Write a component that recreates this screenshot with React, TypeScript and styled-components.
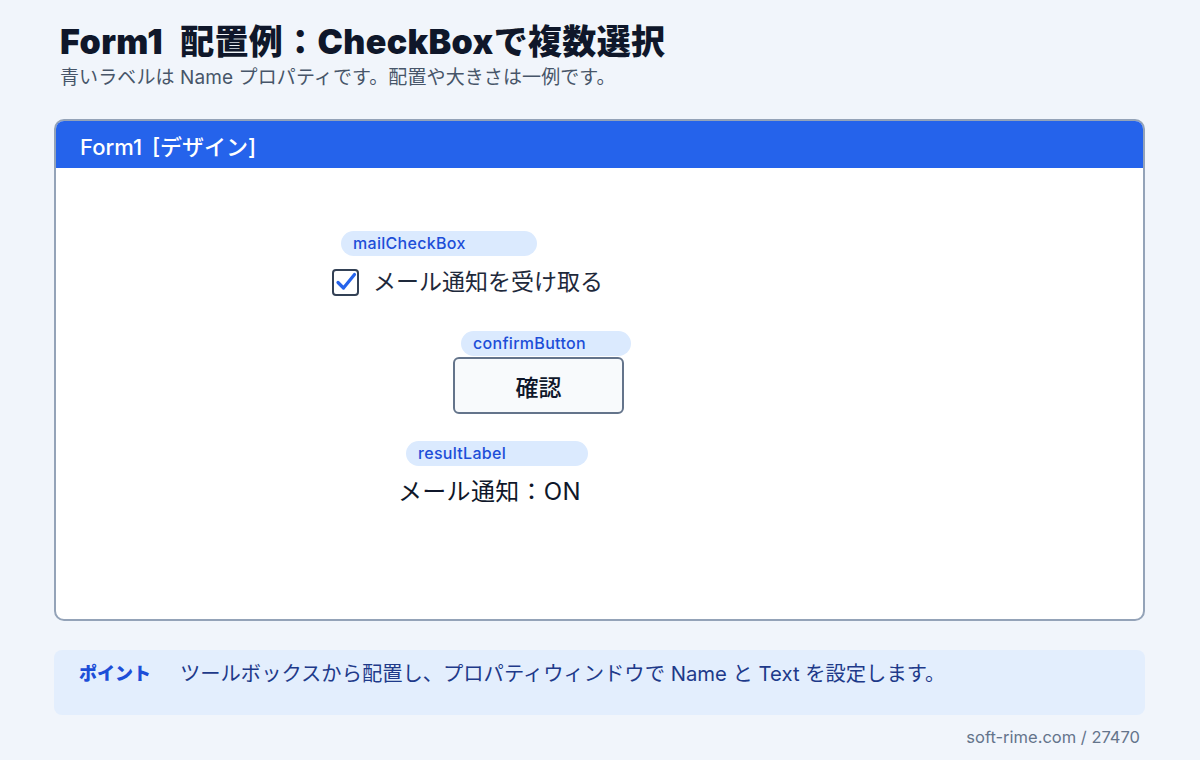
import React from "react";
import styled, { createGlobalStyle } from "styled-components";

const Global = createGlobalStyle`
  html, body { margin: 0; padding: 0; background: #f1f5fb; }
  body {
    font-family: Inter, "Noto Sans CJK JP", "Noto Sans", sans-serif;
  }
  * { box-sizing: border-box; }
`;

const Page = styled.div`
  width: 1200px;
  height: 760px;
  padding: 20px 55px 0 54px;
  display: flex;
  flex-direction: column;
`;

const Title = styled.h1`
  margin: 0 0 0 6px;
  font-size: 34px;
  line-height: 43px;
  font-weight: 900;
  color: #0f172a;
  letter-spacing: 0.35px;
  word-spacing: 10px;
`;

const Subtitle = styled.p`
  margin: 2px 0 0 6px;
  font-size: 19px;
  line-height: 26px;
  color: #475569;
  letter-spacing: 0.1px;
`;

const Card = styled.section`
  margin-top: 28px;
  height: 502px;
  border: 2px solid #94a3b8;
  border-radius: 10px;
  background: #ffffff;
  overflow: hidden;
  display: flex;
  flex-direction: column;
`;

const CardHeader = styled.div`
  height: 47px;
  background: #2563eb;
  color: #ffffff;
  font-size: 22px;
  font-weight: 500;
  display: flex;
  align-items: center;
  padding-left: 24px;
  word-spacing: 4px;
`;

const Canvas = styled.div`
  position: relative;
  flex: 1;
`;

const Tag = styled.div<{ $x: number; $y: number; $w: number }>`
  position: absolute;
  left: ${(p) => p.$x}px;
  top: ${(p) => p.$y}px;
  width: ${(p) => p.$w}px;
  height: 25px;
  border-radius: 13px;
  background: #dbeafe;
  color: #1d4ed8;
  font-size: 16px;
  font-weight: 500;
  line-height: 25px;
  padding-left: 12px;
  letter-spacing: 0.3px;
`;

const Control = styled.div<{ $x: number; $y: number }>`
  position: absolute;
  left: ${(p) => p.$x}px;
  top: ${(p) => p.$y}px;
`;

const CheckRow = styled.label`
  display: flex;
  align-items: center;
  gap: 14px;
  font-size: 23px;
  line-height: 30px;
  color: #1e293b;
`;

const Box = styled.span`
  position: relative;
  width: 27px;
  height: 27px;
  border: 2px solid #334155;
  border-radius: 4px;
  background: #fff;
`;

const CheckMark = styled.svg`
  position: absolute;
  left: 1px;
  top: 0px;
`;

const Button = styled.button`
  width: 171px;
  height: 57px;
  border: 2px solid #64748b;
  border-radius: 6px;
  background: #f8fafc;
  color: #0f172a;
  font-family: inherit;
  font-size: 23px;
  font-weight: 500;
  padding: 0;
`;

const ResultText = styled.div`
  font-size: 24px;
  color: #0f172a;
  line-height: 30px;
  letter-spacing: 0.3px;
`;

const Point = styled.div`
  margin-top: 29px;
  height: 65px;
  border-radius: 8px;
  background: #e3eefd;
  display: flex;
  align-items: flex-start;
  padding: 11px 0 0 25px;
`;

const PointLabel = styled.span`
  width: 101px;
  font-size: 18px;
  font-weight: 800;
  color: #1d4ed8;
  line-height: 26px;
`;

const PointText = styled.span`
  font-size: 20.3px;
  color: #1e3a8a;
  line-height: 26px;
`;

const Footer = styled.div`
  margin-top: 11px;
  text-align: right;
  padding-right: 5px;
  font-size: 16.5px;
  line-height: 22px;
  color: #64748b;
`;

export default function App() {
  return (
    <>
      <Global />
      <Page>
        <Title>Form1 配置例：CheckBoxで複数選択</Title>
        <Subtitle>青いラベルは Name プロパティです。配置や大きさは一例です。</Subtitle>
        <Card>
          <CardHeader>Form1 [デザイン]</CardHeader>
          <Canvas>
            <Tag $x={285} $y={63} $w={196}>mailCheckBox</Tag>
            <Control $x={276} $y={99}>
              <CheckRow>
                <Box>
                  <CheckMark width="22" height="22" viewBox="0 0 22 22">
                    <path d="M3 11.5 L8.5 17 L19.5 3.5" fill="none" stroke="#2563eb" strokeWidth="3.2" strokeLinecap="round" strokeLinejoin="round" />
                  </CheckMark>
                </Box>
                メール通知を受け取る
              </CheckRow>
            </Control>
            <Tag $x={405} $y={163} $w={170}>confirmButton</Tag>
            <Control $x={397} $y={189}>
              <Button>確認</Button>
            </Control>
            <Tag $x={350} $y={273} $w={182}>resultLabel</Tag>
            <Control $x={342} $y={309}>
              <ResultText>メール通知：ON</ResultText>
            </Control>
          </Canvas>
        </Card>
        <Point>
          <PointLabel>ポイント</PointLabel>
          <PointText>ツールボックスから配置し、プロパティウィンドウで Name と Text を設定します。</PointText>
        </Point>
        <Footer>soft-rime.com / 27470</Footer>
      </Page>
    </>
  );
}
